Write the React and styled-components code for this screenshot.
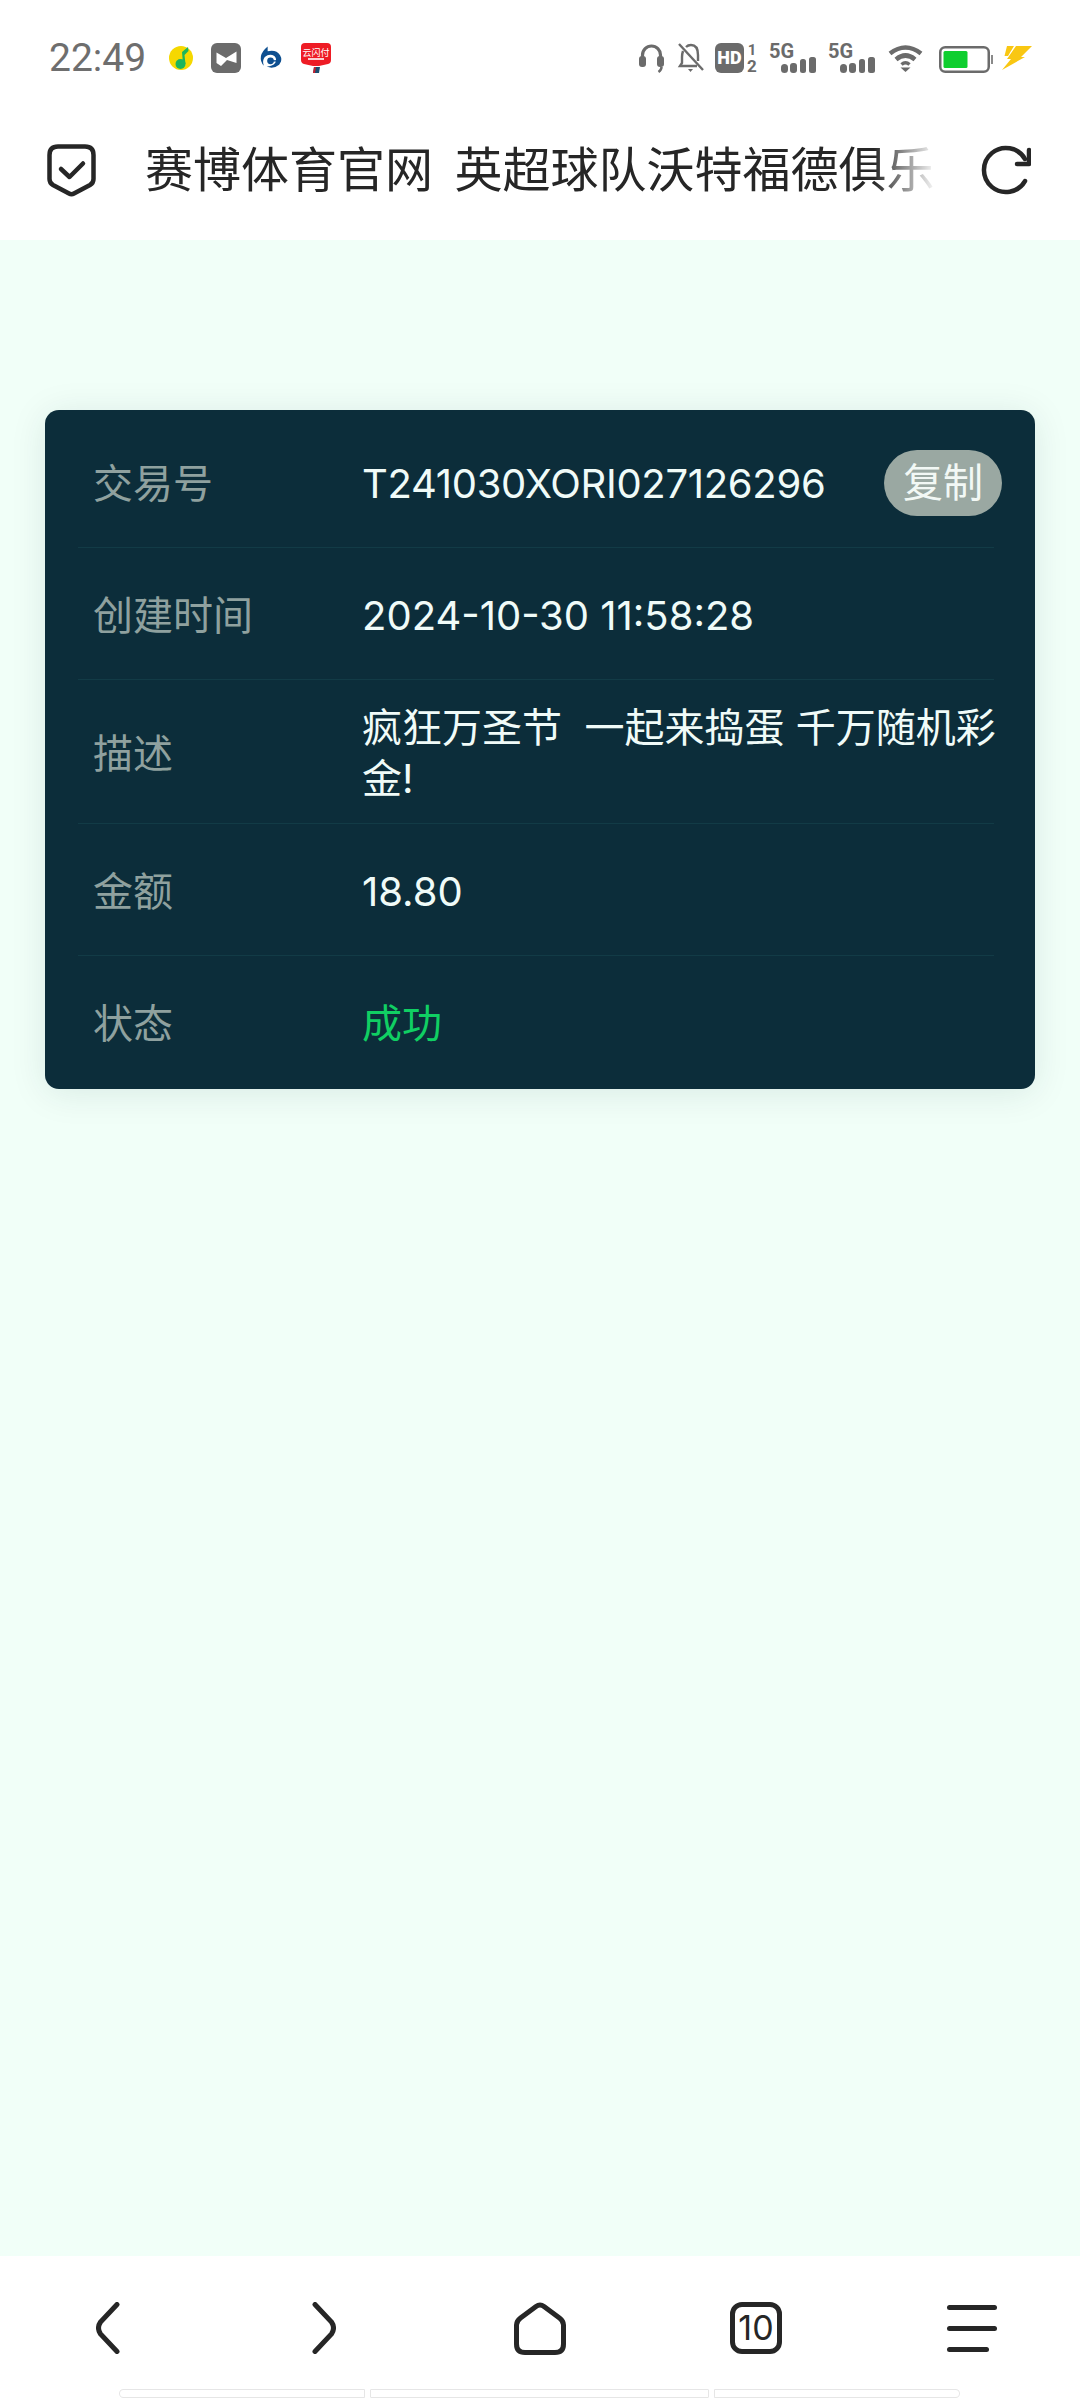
import React from 'react'
import styled, { createGlobalStyle } from 'styled-components'

const GlobalStyle = createGlobalStyle`
    html, body {
        margin: 0;
        padding: 0;
        background: #f1fff8;
    }
    body {
        font-family: Inter, "Noto Sans CJK SC", sans-serif;
    }
`

const Page = styled.div`
    width: 1080px;
    height: 2400px;
    display: flex;
    flex-direction: column;
    overflow: hidden;
`

const StatusBar = styled.div`
    height: 90px;
    box-sizing: border-box;
    padding: 43px 48px 0 49px;
    display: flex;
    align-items: flex-start;
    background: #fff;
`

const Time = styled.span`
    width: 120px;
    font-family: Roboto, sans-serif;
    font-size: 39px;
    line-height: 30px;
    color: #6e6e6e;
`

const AppIcons = styled.div`
    display: flex;
    align-items: flex-start;
`

const SystemIcons = styled.div`
    display: flex;
    align-items: flex-start;
    margin-left: auto;
`

const SysIcon = styled.svg`
    display: block;
    flex: none;
    overflow: visible;
    margin-left: ${props => props.$gap || 0}px;
    margin-top: ${props => props.$top || 0}px;
`

const Toolbar = styled.div`
    height: 150px;
    box-sizing: border-box;
    padding: 10px 49px 0 47px;
    display: flex;
    align-items: center;
    background: #fff;
`

const PageTitle = styled.div`
    flex: none;
    width: 792px;
    margin: 0 44px 9px 49px;
    font-family: "Noto Sans CJK SC", sans-serif;
    font-size: 48px;
    line-height: 60px;
    color: #262626;
    white-space: pre;
    -webkit-mask-image: linear-gradient(to right, #000 92%, transparent 100%);
    mask-image: linear-gradient(to right, #000 92%, transparent 100%);
`

const Content = styled.main`
    flex: 1;
    box-sizing: border-box;
    padding: 170px 45px 0;
    background: #f1fff8;
`

const Card = styled.section`
    padding: 6px 41px 1px 33px;
    border-radius: 14px;
    background: #0c2d3a;
    box-shadow: 0 4px 36px rgba(12, 45, 58, 0.1);
`

const Row = styled.div`
    min-height: 132px;
    box-sizing: border-box;
    padding: 22px 0 19px 15px;
    display: flex;
    align-items: center;
    border-bottom: 1px solid ${props => (props.$last ? 'transparent' : '#123b46')};
`

const Label = styled.div`
    flex: none;
    width: 269px;
    font-size: 40px;
    line-height: 51px;
    color: #8fa19f;
`

const Value = styled.div`
    flex: 1;
    min-width: 0;
    margin-right: -10px;
    font-size: 40px;
    line-height: 51px;
    letter-spacing: ${props => props.$tracking || 0}px;
    color: ${props => props.$color || '#f0fbf8'};
    white-space: pre-wrap;
`

const CopyButton = styled.button`
    flex: none;
    width: 118px;
    height: 66px;
    margin: 0 -8px 0 0;
    padding: 0;
    border: none;
    border-radius: 33px;
    background: #9aa8a2;
    color: #f2f8f5;
    font: inherit;
    font-size: 40px;
    line-height: 66px;
`

const BottomBar = styled.footer`
    height: 144px;
    box-sizing: border-box;
    padding-top: 46px;
    background: #fff;
`

const NavRow = styled.nav`
    display: grid;
    grid-template-columns: repeat(5, 216px);
    justify-items: center;
    height: 53px;
`

const NavIcon = styled.svg`
    display: block;
    flex: none;
`

const TabCount = styled.div`
    width: 52px;
    height: 52px;
    box-sizing: border-box;
    border: 5px solid #262626;
    border-radius: 12px;
    display: flex;
    align-items: center;
    justify-content: center;
    font-size: 34px;
    line-height: 1;
    color: #262626;
`

const Burger = styled.div`
    width: 50px;
    height: 47px;
    margin-top: 3px;
    display: flex;
    flex-direction: column;
    justify-content: space-between;
`

const BurgerLine = styled.div`
    width: ${props => props.$width}px;
    height: 5px;
    border-radius: 3px;
    background: #262626;
`

const Pills = styled.div`
    margin-top: 34px;
    padding-left: 119px;
    display: flex;
    gap: 5px;
`

const Pill = styled.div`
    width: ${props => props.$width}px;
    height: 9px;
    box-sizing: border-box;
    border: 1.5px solid #e6e6e6;
    border-radius: ${props => props.$radius};
`

const rows = [
    { label: '创建时间', value: '2024-10-30 11:58:28' },
    { label: '描述', value: '疯狂万圣节  一起来捣蛋 千万随机彩金!' },
    { label: '金额', value: '18.80' },
]

function StatusIcons() {
    return (
        <>
            <AppIcons>
                <SysIcon $top={3} width="24" height="24" viewBox="0 0 24 24">
                    <circle cx="12" cy="12" r="12" fill="#f5d800" />
                    <path d="M13 6 L19 1 L19.500 5 L15.500 9 L16.500 18 L14 18 Z" fill="#1bb55c" />
                    <circle cx="11.500" cy="18" r="5" fill="#1bb55c" />
                </SysIcon>
                <SysIcon $gap={18} width="30" height="30" viewBox="0 0 30 30">
                    <rect width="30" height="30" rx="6" fill="#6b6b6b" />
                    <path d="M5.500 9.500 L15 15 L25.500 8.500 V20 L16 17 L10 23 L5.500 20 Z" fill="#fff" />
                </SysIcon>
                <SysIcon $gap={19} $top={3} width="22" height="24" viewBox="0 0 23 24">
                    <path d="M8 0 L8 5 Q17 3 21 9 Q24 14 20 19 Q14 24 7 21 Q13 21 16 17 Q18 13 15 10 Q10 7 5 11 Q2 15 4 20 Q0 16 1 10 Q2 5 8 0 Z" fill="#0e4f90" />
                    <circle cx="11" cy="15" r="3.500" fill="#0e4f90" />
                    <path d="M11 15 H22" stroke="#0e4f90" strokeWidth="1.500" />
                </SysIcon>
                <SysIcon $gap={19} width="30" height="30" viewBox="0 0 30 30">
                    <path d="M4 0 H26 Q30 0 30 4 V17 Q30 20 27 21 L18 23 H12 L3 21 Q0 20 0 17 V4 Q0 0 4 0 Z" fill="#ee1c25" />
                    <text x="15" y="12.500" textAnchor="middle" fontSize="9" fill="#fff" fontFamily="'Noto Sans CJK SC', sans-serif">云闪付</text>
                    <rect x="7" y="15" width="16" height="2" fill="#fff" opacity="0.8" />
                    <path d="M13 24 H19 L18 30 H12 Z" fill="#1a4e70" />
                    <path d="M13 24 H15 L14 30 H12 Z" fill="#c8202f" />
                </SysIcon>
            </AppIcons>
            <SystemIcons>
                <SysIcon width="25" height="30" viewBox="0 0 25 30">
                    <path d="M3.500 19 V12 A9 9 0 0 1 21.500 12 V19" fill="none" stroke="#6b6b6b" strokeWidth="3.200" />
                    <rect x="0" y="13" width="7" height="11" rx="3" fill="#6b6b6b" />
                    <rect x="18" y="13" width="7" height="11" rx="3" fill="#6b6b6b" />
                    <path d="M22.500 24 Q22.500 27 19.500 29" fill="none" stroke="#6b6b6b" strokeWidth="2.500" />
                </SysIcon>
                <SysIcon $gap={14} width="26" height="29" viewBox="0 0 26 29">
                    <path d="M5 8 Q4 11 4 14 V20 L2 23 H19 M8 4 Q10 2 13 2 Q20 2 20 12 V18" fill="none" stroke="#6b6b6b" strokeWidth="2.400" />
                    <path d="M1 1 L25 27" stroke="#6b6b6b" strokeWidth="2.400" />
                    <path d="M10 26 H15 L12.500 29 Z" fill="#6b6b6b" />
                </SysIcon>
                <SysIcon $gap={11} width="43" height="30" viewBox="0 0 43 30">
                    <rect width="29" height="30" rx="6" fill="#6b6b6b" />
                    <text x="14.500" y="21" textAnchor="middle" fontSize="18" fontWeight="900" fill="#fff" fontFamily="Roboto, sans-serif">HD</text>
                    <text x="37" y="12" textAnchor="middle" fontSize="15" fontWeight="700" fill="#6b6b6b" fontFamily="Roboto, sans-serif">1</text>
                    <text x="37" y="29" textAnchor="middle" fontSize="17" fontWeight="700" fill="#6b6b6b" fontFamily="Roboto, sans-serif">2</text>
                </SysIcon>
                {[11, 12].map(gap => (
                    <SysIcon key={gap} $gap={gap} width="47" height="30" viewBox="0 0 47 30">
                        <text x="0" y="15" fontSize="20" fontWeight="700" fill="#6b6b6b" fontFamily="Roboto, sans-serif">5G</text>
                        <rect x="12" y="21" width="7" height="9" rx="3.500" fill="#6b6b6b" />
                        <rect x="21" y="20" width="7" height="10" rx="3" fill="#6b6b6b" />
                        <rect x="31" y="16" width="6" height="14" rx="2.500" fill="#6b6b6b" />
                        <rect x="40" y="14" width="7" height="16" rx="2.500" fill="#6b6b6b" />
                    </SysIcon>
                ))}
                <SysIcon $gap={13} $top={2} width="35" height="27" viewBox="0 0 35 27">
                    <path d="M2 8.500 Q17.500 -3.500 33 8.500 M8 14.500 Q17.500 6.500 27 14.500" fill="none" stroke="#6b6b6b" strokeWidth="4.600" />
                    <path d="M13.500 19.500 Q17.500 16 21.500 19.500" fill="none" stroke="#6b6b6b" strokeWidth="3.500" />
                    <path d="M12.500 22.500 H22.500 L17.500 27 Z" fill="#6b6b6b" />
                </SysIcon>
                <SysIcon $gap={16} $top={3} width="54" height="27" viewBox="0 0 54 27">
                    <rect x="1.250" y="1.250" width="48.500" height="24.500" rx="5" fill="#fff" stroke="#6b6b6b" strokeWidth="2.500" />
                    <rect x="4.500" y="5" width="24" height="17" rx="1.500" fill="#0fce2f" />
                    <rect x="52" y="9" width="2" height="9" fill="#8a8a8a" />
                </SysIcon>
                <SysIcon $gap={9} $top={3} width="30" height="24" viewBox="0 0 30 24">
                    <path d="M14 0 H30 L19 11 H23 L0 24 L9 13 H5 Z" fill="#f9c712" />
                    <path d="M5 0 H12 L6 10 H2.500 Z" fill="#f9c712" />
                </SysIcon>
            </SystemIcons>
        </>
    )
}

function App() {
    return (
        <Page>
            <GlobalStyle />
            <StatusBar>
                <Time>22:49</Time>
                <StatusIcons />
            </StatusBar>
            <Toolbar>
                <NavIcon width="49" height="53" viewBox="0 0 49 53">
                    <path d="M11 2.500 H38 Q46.500 2.500 46.500 11 V35 Q46.500 39 43 41 L27 49.500 Q24.500 51 22 49.500 L6 41 Q2.500 39 2.500 35 V11 Q2.500 2.500 11 2.500 Z" fill="none" stroke="#262626" strokeWidth="4.500" />
                    <path d="M14 25 L22.500 33 L36 19.500" fill="none" stroke="#262626" strokeWidth="4.500" strokeLinecap="round" strokeLinejoin="round" />
                </NavIcon>
                <PageTitle>赛博体育官网  英超球队沃特福德俱乐</PageTitle>
                <NavIcon width="50" height="50" viewBox="0 0 50 50">
                    <path d="M44 36 A22 22 0 1 1 44 14" fill="none" stroke="#262626" strokeWidth="4.500" strokeLinecap="round" />
                    <path d="M48 5 V19 H36" fill="none" stroke="#262626" strokeWidth="4.500" strokeLinecap="round" strokeLinejoin="round" />
                </NavIcon>
            </Toolbar>
            <Content>
                <Card>
                    <Row>
                        <Label>交易号</Label>
                        <Value $tracking={-0.3}>T241030XORI027126296</Value>
                        <CopyButton>复制</CopyButton>
                    </Row>
                    {rows.map(row => (
                        <Row key={row.label}>
                            <Label>{row.label}</Label>
                            <Value>{row.value}</Value>
                        </Row>
                    ))}
                    <Row $last>
                        <Label>状态</Label>
                        <Value $color="#10cf63">成功</Value>
                    </Row>
                </Card>
            </Content>
            <BottomBar>
                <NavRow>
                    <NavIcon width="24" height="52" viewBox="0 0 24 52">
                        <path d="M21 2.500 L4.500 20 Q0.500 26 4.500 32 L21 49.500" fill="none" stroke="#262626" strokeWidth="5" strokeLinecap="round" />
                    </NavIcon>
                    <NavIcon width="24" height="52" viewBox="0 0 24 52">
                        <path d="M3 2.500 L19.500 20 Q23.500 26 19.500 32 L3 49.500" fill="none" stroke="#262626" strokeWidth="5" strokeLinecap="round" />
                    </NavIcon>
                    <NavIcon width="52" height="53" viewBox="0 0 52 53">
                        <path d="M22 4.500 Q26 1.500 30 4.500 L45.500 16 Q49.500 19 49.500 23 V42 Q49.500 50.500 41 50.500 H11 Q2.500 50.500 2.500 42 V23 Q2.500 19 6.500 16 Z" fill="none" stroke="#262626" strokeWidth="5" strokeLinejoin="round" />
                    </NavIcon>
                    <TabCount>10</TabCount>
                    <Burger>
                        <BurgerLine $width={50} />
                        <BurgerLine $width={50} />
                        <BurgerLine $width={42} />
                    </Burger>
                </NavRow>
                <Pills>
                    <Pill $width={246} $radius="5px 1px 1px 5px" />
                    <Pill $width={339} $radius="1px" />
                    <Pill $width={246} $radius="1px 5px 5px 1px" />
                </Pills>
            </BottomBar>
        </Page>
    )
}

export default App
